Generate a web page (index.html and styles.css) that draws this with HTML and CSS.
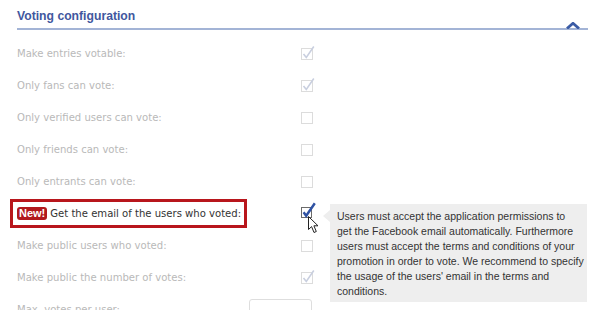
FILE: index.html
```html
<!DOCTYPE html>
<html lang="en">
<head>
    <meta charset="UTF-8">
    <title>Voting configuration</title>
    <link rel="stylesheet" href="styles.css">
</head>
<body>

    <div class="panel">
        <div class="panel-head">
            <h3>Voting configuration</h3>
            <svg class="collapse" width="14" height="7" viewBox="0 0 14 7">
                <path d="M1 6.5 L7 1.3 L13 6.5" fill="none" stroke="#3a5ba5" stroke-width="2.8"/>
            </svg>
        </div>

        <div class="rows">
            <div class="row">
                <span class="label">Make entries votable:</span>
                <span class="control">
                    <svg class="check" width="14" height="16" viewBox="0 0 14 16">
                        <rect x="0.5" y="3.5" width="11" height="11" fill="#fff" stroke="#dcdcdc"/>
                        <path d="M2.5 9 L5.3 12.5 L12.8 1.5" fill="none" stroke="#c9cfdf" stroke-width="1.6"/>
                    </svg>
                </span>
            </div>
            <div class="row">
                <span class="label">Only fans can vote:</span>
                <span class="control">
                    <svg class="check" width="14" height="16" viewBox="0 0 14 16">
                        <rect x="0.5" y="3.5" width="11" height="11" fill="#fff" stroke="#dcdcdc"/>
                        <path d="M2.5 9 L5.3 12.5 L12.8 1.5" fill="none" stroke="#c9cfdf" stroke-width="1.6"/>
                    </svg>
                </span>
            </div>
            <div class="row">
                <span class="label">Only verified users can vote:</span>
                <span class="control">
                    <svg class="check" width="14" height="16" viewBox="0 0 14 16">
                        <rect x="0.5" y="3.5" width="11" height="11" fill="#fff" stroke="#dcdcdc"/>
                    </svg>
                </span>
            </div>
            <div class="row">
                <span class="label">Only friends can vote:</span>
                <span class="control">
                    <svg class="check" width="14" height="16" viewBox="0 0 14 16">
                        <rect x="0.5" y="3.5" width="11" height="11" fill="#fff" stroke="#dcdcdc"/>
                    </svg>
                </span>
            </div>
            <div class="row">
                <span class="label">Only entrants can vote:</span>
                <span class="control">
                    <svg class="check" width="14" height="16" viewBox="0 0 14 16">
                        <rect x="0.5" y="3.5" width="11" height="11" fill="#fff" stroke="#dcdcdc"/>
                    </svg>
                </span>
            </div>

            <!-- highlighted option with help tooltip -->
            <div class="row row-active">
                <span class="label">
                    <span class="highlight"><span class="badge">New!</span> Get the email of the users who voted:</span>
                </span>
                <span class="control">
                    <svg class="check" width="16" height="18" viewBox="0 0 16 18">
                        <rect x="0.5" y="5.5" width="10" height="10" fill="#fff" stroke="#6b6b6b"/>
                        <path d="M2.6 10.2 L5.2 13.8 L13.8 1.2" fill="none" stroke="#2f52a3" stroke-width="2.4"/>
                    </svg>
                </span>
                <svg class="cursor" width="12" height="18" viewBox="0 0 12 18">
                    <path d="M0.5 0.5 L0.5 13.5 L3.6 10.6 L6 16.5 L8.3 15.5 L5.9 9.8 L10 9.8 Z" fill="#fff" stroke="#222" stroke-width="1"/>
                </svg>
                <div class="tooltip">
                    Users must accept the application permissions to<br>
                    get the Facebook email automatically. Furthermore<br>
                    users must accept the terms and conditions of your<br>
                    promotion in order to vote. We recommend to specify<br>
                    the usage of the users' email in the terms and<br>
                    conditions.
                </div>
            </div>

            <div class="row">
                <span class="label">Make public users who voted:</span>
                <span class="control">
                    <svg class="check" width="14" height="16" viewBox="0 0 14 16">
                        <rect x="0.5" y="3.5" width="11" height="11" fill="#fff" stroke="#dcdcdc"/>
                    </svg>
                </span>
            </div>
            <div class="row">
                <span class="label">Make public the number of votes:</span>
                <span class="control">
                    <svg class="check" width="14" height="16" viewBox="0 0 14 16">
                        <rect x="0.5" y="3.5" width="11" height="11" fill="#fff" stroke="#dcdcdc"/>
                        <path d="M2.5 9 L5.3 12.5 L12.8 1.5" fill="none" stroke="#c9cfdf" stroke-width="1.6"/>
                    </svg>
                </span>
            </div>
            <div class="row">
                <span class="label">Max. votes per user:</span>
                <span class="control">
                    <input type="text" class="num-input">
                </span>
            </div>
        </div>
    </div>

</body>
</html>
```

FILE: styles.css
```css
/* Reset */
* {
    margin: 0;
    padding: 0;
    box-sizing: border-box;
}

body {
    font-family: 'DejaVu Sans Condensed', 'DejaVu Sans', sans-serif;
    background-color: #fff;
    overflow: hidden;
}

.panel {
    margin-left: 17px;
    width: 571px;
}

.panel-head {
    display: flex;
    justify-content: space-between;
    align-items: flex-end;
    padding-top: 9px;
    border-bottom: 2px solid #a3b4d6;
}

.panel-head h3 {
    font-family: 'Liberation Sans', Arial, sans-serif;
    font-size: 12.2px;
    line-height: 14px;
    font-weight: bold;
    color: #41579e;
    margin-bottom: 5px;
}

.collapse {
    display: block;
    margin-right: 8px;
    margin-bottom: -1px;
}

.rows {
    margin-top: 7px;
}

.row {
    position: relative;
    display: flex;
    align-items: center;
    width: 298px;
    height: 32px;
}

.label {
    flex: 1;
    font-size: 11.2px;
    color: #b9b9b9;
    white-space: nowrap;
}

.control {
    width: 66px;
    display: flex;
    justify-content: flex-end;
    align-items: center;
}

.check {
    display: block;
}

/* New option, framed in red */
.highlight {
    display: inline-flex;
    align-items: center;
    margin-left: -7px;
    padding: 5px 3px 5px 4px;
    border: 3px solid #b8161c;
    color: #333;
}

.badge {
    display: inline-block;
    background-color: #b1191d;
    color: #fff;
    font-family: 'Liberation Sans', Arial, sans-serif;
    font-size: 11px;
    font-weight: bold;
    line-height: 13px;
    padding: 0 2px;
    border-radius: 3px;
    margin-right: 3px;
}

.row-active .check {
    margin-right: -2px;
    margin-top: -5px;
}

.cursor {
    position: absolute;
    left: 291px;
    top: 19px;
}

.tooltip {
    position: absolute;
    left: 313px;
    top: 7px;
    width: 257px;
    padding: 5px 6px 3px 7px;
    background-color: #eeeeee;
    font-family: 'Liberation Sans', Arial, sans-serif;
    font-size: 10.5px;
    line-height: 15px;
    color: #333;
    white-space: nowrap;
}

.tooltip::before {
    content: "";
    position: absolute;
    left: -7px;
    top: 6px;
    border-top: 6px solid transparent;
    border-bottom: 6px solid transparent;
    border-right: 7px solid #eeeeee;
}

.num-input {
    width: 63px;
    height: 24px;
    margin-right: 3px;
    margin-top: 4px;
    border: 1px solid #dedede;
    border-radius: 3px;
    background: #fff;
}
```
